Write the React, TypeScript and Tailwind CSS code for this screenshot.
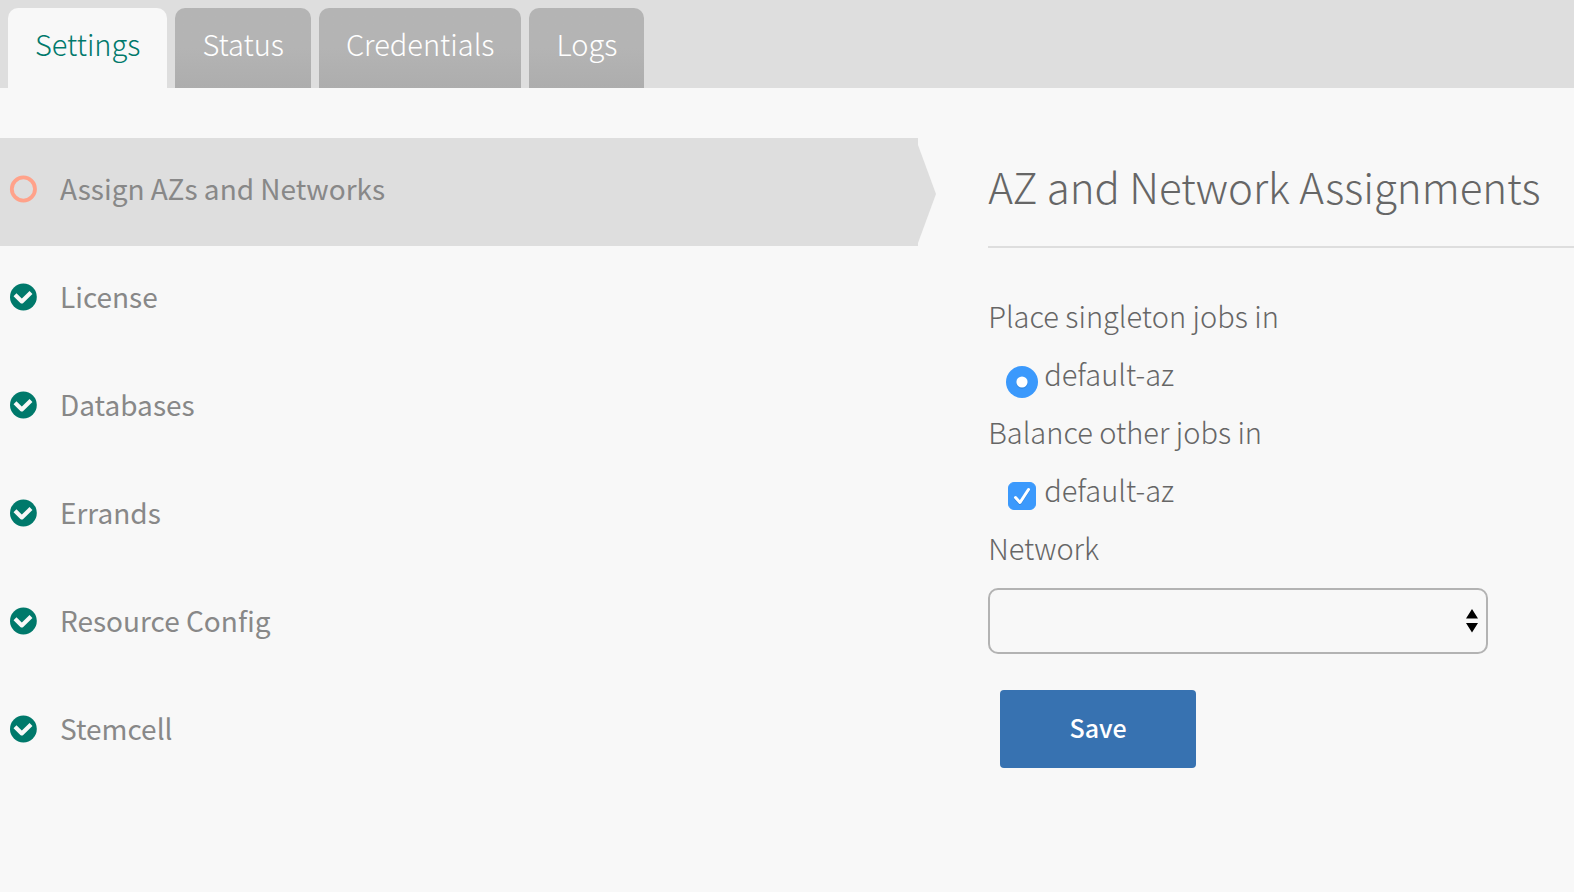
import { useState } from "react";

const tabs = ["Settings", "Status", "Credentials", "Logs"];

const steps = [
  { label: "Assign AZs and Networks", done: false },
  { label: "License", done: true },
  { label: "Databases", done: true },
  { label: "Errands", done: true },
  { label: "Resource Config", done: true },
  { label: "Stemcell", done: true },
];

function StepIcon({ done }: { done: boolean }) {
  return (
    <svg viewBox="0 0 28 28" className="h-7 w-7 shrink-0" aria-hidden="true">
      {done ? (
        <>
          <circle cx="14.4" cy="14" r="13.4" fill="#00796b" />
          <path
            d="M6 11.8 L12.8 18.4 L22 9.6"
            fill="none"
            stroke="#f8f8f8"
            strokeWidth="4.2"
            strokeLinejoin="round"
          />
        </>
      ) : (
        <circle cx="14.4" cy="14" r="11.6" fill="none" stroke="#ffa28a" strokeWidth="3.8" />
      )}
    </svg>
  );
}

export default function App() {
  const [tab, setTab] = useState("Settings");
  const [balance, setBalance] = useState(true);

  return (
    <div className="min-h-screen overflow-x-hidden bg-[#f8f8f8] font-['Noto_Sans_CJK_JP','Noto_Sans_CJK_SC',sans-serif] text-[#666666]">
      <header className="bg-[#dedede] pt-2 pl-2">
        <nav className="flex gap-2">
          {tabs.map((name) => (
            <button
              key={name}
              type="button"
              onClick={() => setTab(name)}
              className={
                "h-20 rounded-t-[10px] px-[27px] pb-2.5 text-[29px] leading-10 font-light " +
                (tab === name
                  ? "bg-[#f8f8f8] text-[#00796b]"
                  : "bg-linear-to-b from-[#b4b4b4] from-50% to-[#adadad] text-white")
              }
            >
              {name}
            </button>
          ))}
        </nav>
      </header>

      <main className="grid grid-cols-12 pt-[50px]">
        <ul className="col-span-7">
          {steps.map((step, i) => (
            <li key={step.label} className="relative">
              <a
                href="#"
                aria-current={i === 0 ? "step" : undefined}
                className={
                  "flex h-27 items-center gap-[23px] pb-1.5 pl-[9px] text-[28px] leading-10 font-normal text-[#888888] " +
                  (i === 0 ? "bg-[#dedede]" : "")
                }
              >
                <StepIcon done={step.done} />
                <span className="pb-0.5">{step.label}</span>
              </a>
              {i === 0 && (
                <svg
                  viewBox="0 0 18 108"
                  className="absolute top-0 left-full h-27 w-[18px]"
                  aria-hidden="true"
                >
                  <path d="M0 7 L18 56 L0 105 Z" fill="#dedede" />
                </svg>
              )}
            </li>
          ))}
        </ul>

        <form className="col-span-5 pl-[70px]" onSubmit={(e) => e.preventDefault()}>
          <h1 className="h-[110px] border-b-2 border-[#dedede] pt-[18px] text-[42px] leading-[60px] font-light whitespace-nowrap">
            AZ and Network Assignments
          </h1>

          <div className="flex flex-col pt-[38px] text-[29px] leading-[58px] font-light">
            <p>Place singleton jobs in</p>
            <label className="flex items-center gap-1.5 pl-[18px]">
              <span className="relative mt-[18px] h-8 w-8 shrink-0">
                <input
                  type="radio"
                  name="singleton"
                  defaultChecked
                  className="block h-8 w-8 appearance-none rounded-full bg-[#3b99fc]"
                />
                <svg viewBox="0 0 32 32" className="pointer-events-none absolute inset-0" aria-hidden="true">
                  <circle cx="16" cy="17" r="5.8" fill="#2f85df" />
                  <circle cx="16" cy="16" r="5.6" fill="#ffffff" />
                </svg>
              </span>
              default-az
            </label>
            <p>Balance other jobs in</p>
            <label className="flex items-center gap-1.5 pl-5">
              <span className="relative mt-3.5 mr-0.5 h-7 w-7 shrink-0">
                <input
                  type="checkbox"
                  checked={balance}
                  onChange={() => setBalance(!balance)}
                  className="block h-7 w-7 appearance-none rounded-md border border-[#3b99fc] checked:bg-[#3b99fc]"
                />
                {balance && (
                  <svg
                    viewBox="0 0 28 28"
                    className="pointer-events-none absolute inset-0"
                    fill="none"
                    strokeLinecap="round"
                    strokeLinejoin="round"
                    strokeWidth="3"
                    aria-hidden="true"
                  >
                    <path d="M7.5 16.5 L12 21.5 L20.5 8.5" stroke="#2f85df" />
                    <path d="M7.5 15.5 L12 20.5 L20.5 7.5" stroke="#ffffff" />
                  </svg>
                )}
              </span>
              default-az
            </label>
            <label htmlFor="network">Network</label>
          </div>

          <div className="relative mt-3 max-w-[500px]">
            <select
              id="network"
              className="block h-[66px] w-full appearance-none rounded-[10px] border-2 border-[#b3b3b3] bg-transparent px-4 text-[29px]"
            >
              <option value=""></option>
            </select>
            <svg
              viewBox="0 0 12 24"
              className="pointer-events-none absolute top-[21px] right-2.5 h-6 w-3"
              aria-hidden="true"
            >
              <path d="M0 9.6 L6 0 L12 9.6 Z M0 14 L12 14 L6 23.4 Z" fill="#000000" />
            </svg>
          </div>

          <button
            type="submit"
            className="mt-9 ml-3 h-[78px] w-[196px] rounded bg-[#3772b1] pb-1 text-[25px] leading-10 font-medium text-white"
          >
            Save
          </button>
        </form>
      </main>
    </div>
  );
}
